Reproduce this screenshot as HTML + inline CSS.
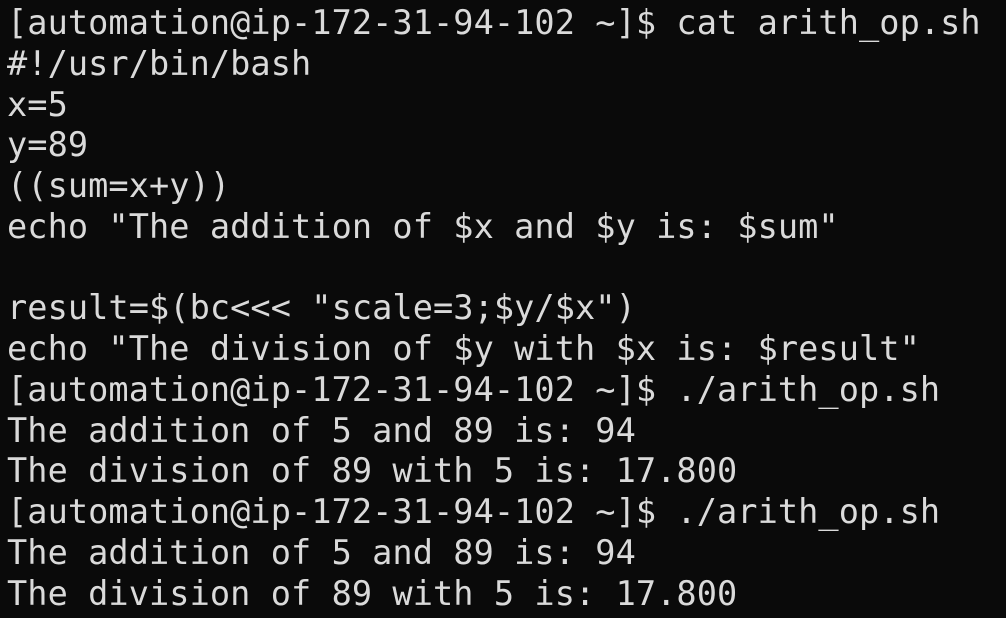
<!DOCTYPE html>
<html><head><meta charset="utf-8"><style>
html,body{margin:0;padding:0;background:#0a0a0a;width:1006px;height:618px;overflow:hidden}
pre{margin:0;position:absolute;left:7px;top:3px;font-family:"DejaVu Sans Mono","Liberation Mono",monospace;font-size:33.6px;line-height:40.75px;color:#dadada;letter-spacing:0.07px}
</style></head><body>
<pre>[automation@ip-172-31-94-102 ~]$ cat arith_op.sh
#!/usr/bin/bash
x=5
y=89
((sum=x+y))
echo "The addition of $x and $y is: $sum"

result=$(bc&lt;&lt;&lt; "scale=3;$y/$x")
echo "The division of $y with $x is: $result"
[automation@ip-172-31-94-102 ~]$ ./arith_op.sh
The addition of 5 and 89 is: 94
The division of 89 with 5 is: 17.800
[automation@ip-172-31-94-102 ~]$ ./arith_op.sh
The addition of 5 and 89 is: 94
The division of 89 with 5 is: 17.800</pre>
</body></html>
